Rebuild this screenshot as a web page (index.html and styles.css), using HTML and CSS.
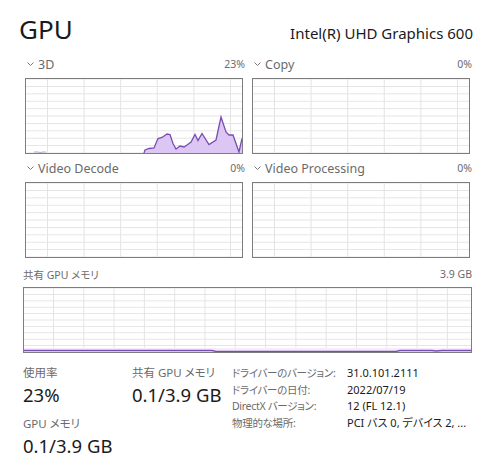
FILE: index.html
```html
<!DOCTYPE html>
<html lang="ja">
<head>
  <meta charset="UTF-8">
  <title>GPU</title>
  <link rel="stylesheet" href="styles.css">
</head>
<body>

  <div class="header">
    <div class="title">GPU</div>
    <div class="adapter">Intel(R) UHD Graphics 600</div>
  </div>

  <div class="charts">

    <div class="chart">
      <div class="chart-head">
        <span class="chart-name"><svg class="chevron" viewBox="0 0 7 4"><polyline points="0.5,0.5 3.5,3.5 6.5,0.5" /></svg>3D</span>
        <span class="chart-value">23%</span>
      </div>
      <div class="graph">
        <svg class="plot" viewBox="0 0 216 74" preserveAspectRatio="none">
          <polyline class="line line-faint" points="8,73 12,73 14,73.5 17,73 20,73" />
          <polygon class="area" points="118,74 119,71 123,69.5 128,69 132,59.5 136,58.5 141,55 144,55.5 147,64.5 150,70 154,67 158,68 161,66 165,63 169,55.5 172,61.5 176,54.5 183,65.5 190,61 195,38 200,53 203,56 207,56 213,73 216,59.5 216,74" />
          <polyline class="line" points="118,74 119,71 123,69.5 128,69 132,59.5 136,58.5 141,55 144,55.5 147,64.5 150,70 154,67 158,68 161,66 165,63 169,55.5 172,61.5 176,54.5 183,65.5 190,61 195,38 200,53 203,56 207,56 213,73 216,59.5" />
        </svg>
      </div>
    </div>

    <div class="chart">
      <div class="chart-head">
        <span class="chart-name"><svg class="chevron" viewBox="0 0 7 4"><polyline points="0.5,0.5 3.5,3.5 6.5,0.5" /></svg>Copy</span>
        <span class="chart-value">0%</span>
      </div>
      <div class="graph"></div>
    </div>

    <div class="chart">
      <div class="chart-head">
        <span class="chart-name"><svg class="chevron" viewBox="0 0 7 4"><polyline points="0.5,0.5 3.5,3.5 6.5,0.5" /></svg>Video Decode</span>
        <span class="chart-value">0%</span>
      </div>
      <div class="graph"></div>
    </div>

    <div class="chart">
      <div class="chart-head">
        <span class="chart-name"><svg class="chevron" viewBox="0 0 7 4"><polyline points="0.5,0.5 3.5,3.5 6.5,0.5" /></svg>Video Processing</span>
        <span class="chart-value">0%</span>
      </div>
      <div class="graph"></div>
    </div>

  </div>

  <div class="memory">
    <div class="chart-head">
      <span class="chart-name chart-name-ja">共有 GPU メモリ</span>
      <span class="chart-value">3.9 GB</span>
    </div>
    <div class="graph graph-wide">
      <svg class="plot" viewBox="0 0 447 64" preserveAspectRatio="none">
        <polygon class="area-soft" points="0,60 447,60 447,64 0,64" />
        <polyline class="line" points="0,62.5 188,62.5 192,63.5 372,63.5 376,62.5 408,62.5 412,63 418,62.5 447,62.5" />
      </svg>
    </div>
  </div>

  <div class="stats">
    <div class="stat-col">
      <div class="stat-label">使用率</div>
      <div class="stat-value">23%</div>
      <div class="stat-label">GPU メモリ</div>
      <div class="stat-value">0.1/3.9 GB</div>
    </div>
    <div class="stat-col stat-col-2">
      <div class="stat-label">共有 GPU メモリ</div>
      <div class="stat-value">0.1/3.9 GB</div>
    </div>
    <div class="details">
      <span class="detail-label">ドライバーのバージョン:</span>
      <span class="detail-value">31.0.101.2111</span>
      <span class="detail-label">ドライバーの日付:</span>
      <span class="detail-value">2022/07/19</span>
      <span class="detail-label">DirectX バージョン:</span>
      <span class="detail-value">12 (FL 12.1)</span>
      <span class="detail-label">物理的な場所:</span>
      <span class="detail-value">PCI バス 0, デバイス 2, ...</span>
    </div>
  </div>

</body>
</html>
```

FILE: styles.css
```css
body {
  margin: 0;
  background: #fff;
  color: #1a1a1a;
  font-family: "Noto Sans", "Noto Sans CJK JP", sans-serif;
  font-feature-settings: "palt";
}

.header {
  display: flex;
  justify-content: space-between;
  align-items: baseline;
  padding: 12px 22px 0 19px;
}

.title {
  font-size: 26px;
  line-height: 34px;
}

.adapter {
  font-size: 15px;
}

.charts {
  display: grid;
  grid-template-columns: 220px 220px;
  column-gap: 7px;
  row-gap: 4px;
  margin: 8px 0 0 25px;
}

.chart-head {
  display: flex;
  justify-content: space-between;
  align-items: center;
  height: 20px;
  margin-bottom: 4px;
  color: #6b6b6b;
  font-size: 12.5px;
}

.chart-name {
  display: flex;
  align-items: center;
}

.chart-name-ja {
  font-size: 10.5px;
}

.chart-value {
  font-size: 10.5px;
}

.chevron {
  width: 7px;
  height: 4px;
  margin: 0 4px 0 2px;
}

.chevron polyline {
  fill: none;
  stroke: #777;
  stroke-width: 1;
}

.graph {
  position: relative;
  width: 216px;
  height: 74px;
  border: 1px solid #7d7d7d;
  background-color: #fff;
  background-image:
    linear-gradient(to right, #e4e4e4 1px, transparent 1px),
    linear-gradient(to bottom, #e4e4e4 1px, transparent 1px);
  background-size: 36.6px 100%, 100% 7.4px;
  background-position: 21px 0, 0 7px;
}

.graph-wide {
  width: 447px;
  height: 64px;
  background-size: 30.3px 100%, 100% 6.4px;
  background-position: 29px 0, 0 6px;
}

.plot {
  position: absolute;
  left: 0;
  top: 0;
  width: 100%;
  height: 100%;
}

.line {
  fill: none;
  stroke: #7a4db3;
  stroke-width: 1.3;
}

.line-faint {
  stroke: #b9a6d2;
  stroke-width: 1;
}

.area {
  fill: #dcc7f4;
  stroke: none;
}

.area-soft {
  fill: #f6ecfb;
  stroke: none;
}

.memory {
  margin: 6px 0 0 23px;
  width: 449px;
}

.memory .chart-head {
  margin-bottom: 3px;
}

.stats {
  display: flex;
  align-items: flex-start;
  margin: 11px 0 0 23px;
}

.stat-col {
  width: 109px;
}

.stat-col-2 {
  width: 100px;
}

.stat-label {
  font-size: 11.5px;
  line-height: 18px;
  color: #6b6b6b;
}

.stat-value {
  font-size: 18.5px;
  line-height: 26px;
  margin-bottom: 7px;
}

.details {
  display: grid;
  grid-template-columns: 115px auto;
  font-size: 10.5px;
  line-height: 16.7px;
  white-space: nowrap;
  margin-top: 1px;
}

.detail-label {
  color: #6b6b6b;
  letter-spacing: -0.3px;
}

.detail-value {
  font-size: 11px;
}
```
